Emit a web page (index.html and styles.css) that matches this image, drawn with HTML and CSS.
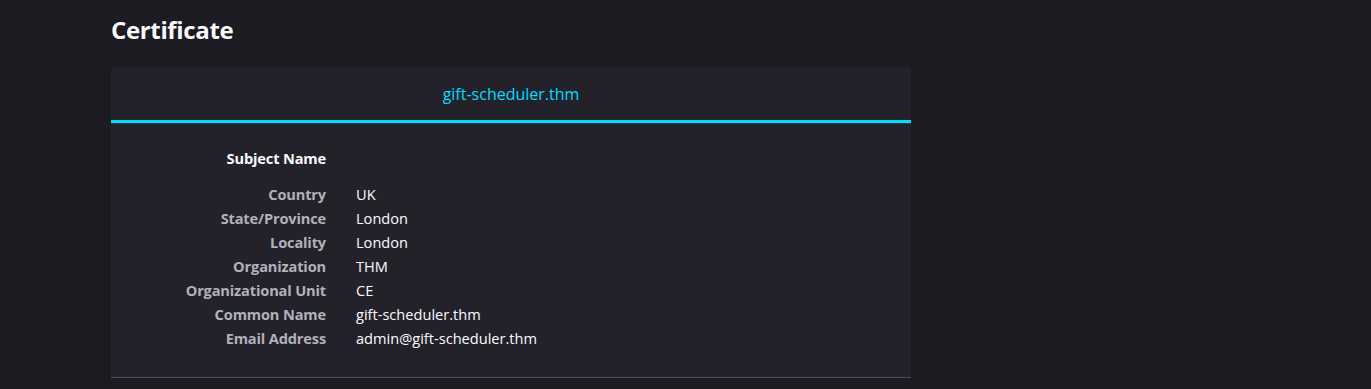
FILE: index.html
```html
<!DOCTYPE html>
<html>
<head>
<meta charset="utf-8">
<link rel="stylesheet" href="styles.css">
</head>
<body>
<main class="page">
  <h1 class="title">Certificate</h1>
  <section class="card">
    <div class="tabs">
      <div class="tab tab-active">gift-scheduler.thm</div>
    </div>
    <div class="info">
      <div class="row heading"><span class="label">Subject Name</span><span class="value"></span></div>
      <div class="row"><span class="label">Country</span><span class="value">UK</span></div>
      <div class="row"><span class="label">State/Province</span><span class="value">London</span></div>
      <div class="row"><span class="label">Locality</span><span class="value">London</span></div>
      <div class="row"><span class="label">Organization</span><span class="value">THM</span></div>
      <div class="row"><span class="label">Organizational Unit</span><span class="value">CE</span></div>
      <div class="row"><span class="label">Common Name</span><span class="value">gift-scheduler.thm</span></div>
      <div class="row"><span class="label">Email Address</span><span class="value">admin@gift-scheduler.thm</span></div>
    </div>
  </section>
</main>
</body>
</html>
```
FILE: styles.css
```css
html, body {
  margin: 0;
  padding: 0;
  background: #1c1b22;
  height: 100%;
  overflow: hidden;
}
body {
  font-family: "Open Sans", "Noto Sans", sans-serif;
  color: #fbfbfe;
}
.page {
  padding-left: 111px;
  width: 800px;
}
.title {
  margin: 0;
  padding-top: 13px;
  height: 67px;
  box-sizing: border-box;
  font-size: 24px;
  font-weight: 700;
  line-height: 34px;
  letter-spacing: -0.35px;
}
.card {
  background: #23222b;
  border-radius: 4px 4px 0 0;
  border-bottom: 1px solid #4e4d57;
  height: 311px;
  box-sizing: border-box;
}
.tabs {
  display: flex;
  height: 57px;
  border-bottom: 1px solid #3a3944;
  box-sizing: border-box;
}
.tab {
  flex: 1;
  display: flex;
  align-items: center;
  justify-content: center;
  font-size: 16px;
  color: #00ddff;
  letter-spacing: 0;
  border-bottom: 3px solid #00ddff;
  padding-top: 1px;
}
.info {
  padding-top: 22px;
  font-size: 14.6px;
}
.row {
  display: grid;
  grid-template-columns: 215px 1fr;
  column-gap: 30px;
  height: 24px;
  line-height: 24px;
}
.row.heading {
  height: 36px;
  line-height: 24px;
}
.label {
  text-align: right;
  font-weight: 700;
  color: #b1b1b9;
  letter-spacing: -0.15px;
}
.heading .label {
  color: #fbfbfe;
}
.value {
  color: #fbfbfe;
}
```
